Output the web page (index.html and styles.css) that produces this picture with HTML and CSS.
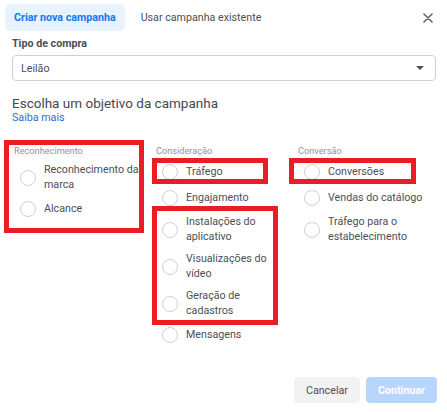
FILE: index.html
```html
<!DOCTYPE html>
<html lang="pt-BR">
<head>
<meta charset="utf-8">
<title>Criar nova campanha</title>
<link rel="stylesheet" href="styles.css">
</head>
<body>
<div class="dialog">
  <header class="tabs">
    <div class="tab active">Criar nova campanha</div>
    <div class="tab">Usar campanha existente</div>
    <button class="close" aria-label="Fechar">
      <svg width="10" height="10" viewBox="0 0 10 10"><path d="M1 1L9 9M9 1L1 9" stroke="#606770" stroke-width="1.6" stroke-linecap="round"/></svg>
    </button>
  </header>

  <section class="buy-type">
    <div class="field-label">Tipo de compra</div>
    <div class="select"><span>Leilão</span><span class="caret"></span></div>
  </section>

  <section class="objective">
    <h2 class="title">Escolha um objetivo da campanha</h2>
    <a class="link">Saiba mais</a>
    <div class="columns">
      <div class="col">
        <div class="cat">Reconhecimento</div>
        <ul class="options">
          <li class="opt"><span class="radio"></span><span class="txt">Reconhecimento da marca</span></li>
          <li class="opt"><span class="radio"></span><span class="txt">Alcance</span></li>
        </ul>
      </div>
      <div class="col">
        <div class="cat">Consideração</div>
        <ul class="options">
          <li class="opt"><span class="radio"></span><span class="txt">Tráfego</span></li>
          <li class="opt"><span class="radio"></span><span class="txt">Engajamento</span></li>
          <li class="opt"><span class="radio"></span><span class="txt">Instalações do aplicativo</span></li>
          <li class="opt"><span class="radio"></span><span class="txt">Visualizações do vídeo</span></li>
          <li class="opt"><span class="radio"></span><span class="txt">Geração de cadastros</span></li>
          <li class="opt"><span class="radio"></span><span class="txt">Mensagens</span></li>
        </ul>
      </div>
      <div class="col">
        <div class="cat">Conversão</div>
        <ul class="options">
          <li class="opt"><span class="radio"></span><span class="txt">Conversões</span></li>
          <li class="opt"><span class="radio"></span><span class="txt">Vendas do catálogo</span></li>
          <li class="opt"><span class="radio"></span><span class="txt">Tráfego para o estabelecimento</span></li>
        </ul>
      </div>
    </div>
  </section>

  <footer class="actions">
    <button class="btn btn-cancel">Cancelar</button>
    <button class="btn btn-primary">Continuar</button>
  </footer>

  <div class="mark mark-awareness"></div>
  <div class="mark mark-traffic"></div>
  <div class="mark mark-installs"></div>
  <div class="mark mark-conversions"></div>
</div>
</body>
</html>
```

FILE: styles.css
```css
html, body {
  margin: 0;
  padding: 0;
  background: #ffffff;
}

body {
  font-family: Roboto, "Liberation Sans", Arial, sans-serif;
  color: #4b4f56;
}

.dialog {
  position: relative;
  height: 412px;
  box-sizing: border-box;
  padding: 4px 11px 9px 12px;
  display: flex;
  flex-direction: column;
}

/* Tabs */
.tabs {
  display: flex;
  align-items: center;
  gap: 7px;
  margin-left: -7px;
}

.tab {
  height: 27px;
  line-height: 27px;
  padding: 0 9px;
  border-radius: 5px;
  font-size: 10.7px;
  color: #4b4f56;
}

.tab.active {
  background: #e7f3ff;
  color: #1877f2;
  font-weight: 700;
}

.close {
  margin-left: auto;
  width: 16px;
  height: 16px;
  padding: 0;
  border: 0;
  background: transparent;
  display: flex;
  align-items: center;
  justify-content: center;
}

/* Buy type */
.field-label {
  margin-top: 6px;
  font-size: 10.7px;
  line-height: 14px;
  font-weight: 700;
  color: #4b4f56;
}

.select {
  margin-top: 4px;
  height: 26px;
  box-sizing: border-box;
  border: 1px solid #ccd0d5;
  border-radius: 4px;
  padding: 0 11px 0 8px;
  display: flex;
  align-items: center;
  justify-content: space-between;
  font-size: 10.7px;
  color: #4b4f56;
}

.caret {
  width: 0;
  height: 0;
  border-left: 4px solid transparent;
  border-right: 4px solid transparent;
  border-top: 4px solid #4b4f56;
}

/* Objective */
.title {
  margin: 14px 0 0;
  font-size: 13.5px;
  line-height: 16px;
  font-weight: 400;
  color: #444950;
}

.link {
  display: block;
  font-size: 10.7px;
  line-height: 14px;
  color: #216fdb;
}

.columns {
  display: grid;
  grid-template-columns: 142px 142px 142px;
  margin-top: 20px;
  margin-left: 2px;
}

.cat {
  font-size: 9.2px;
  line-height: 12px;
  color: #90949c;
}

.options {
  list-style: none;
  margin: 6px 0 0;
  padding: 0;
  display: flex;
  flex-direction: column;
  gap: 8px;
}

.opt {
  display: flex;
  align-items: center;
  min-height: 18px;
}

.radio {
  flex-shrink: 0;
  width: 16px;
  height: 16px;
  box-sizing: border-box;
  border: 1px solid #ccd0d5;
  border-radius: 50%;
  margin-left: 6px;
  margin-right: 8px;
  background: #fff;
}

.txt {
  width: 97px;
  font-size: 10.7px;
  line-height: 14.5px;
  color: #4b4f56;
}

/* Footer */
.actions {
  margin-top: auto;
  margin-right: -1px;
  display: flex;
  justify-content: flex-end;
  gap: 6px;
}

.btn {
  height: 26px;
  padding: 0 12px;
  border: 0;
  border-radius: 4px;
  font-family: inherit;
  font-size: 10.7px;
}

.btn-cancel {
  background: #f2f2f2;
  color: #4b4f56;
  min-width: 65px;
}

.btn-primary {
  background: #b8d6fb;
  color: #ffffff;
  font-weight: 700;
  min-width: 70px;
}

/* Red annotation boxes drawn over the content */
.mark {
  position: absolute;
  box-sizing: border-box;
  border: 5px solid #ec1c24;
  pointer-events: none;
}

.mark-awareness {
  left: 4px;
  top: 140px;
  width: 140px;
  height: 93px;
}

.mark-traffic {
  left: 152px;
  top: 158px;
  width: 116px;
  height: 26px;
}

.mark-installs {
  left: 152px;
  top: 206px;
  width: 126px;
  height: 119px;
}

.mark-conversions {
  left: 289px;
  top: 158px;
  width: 127px;
  height: 26px;
}
```
